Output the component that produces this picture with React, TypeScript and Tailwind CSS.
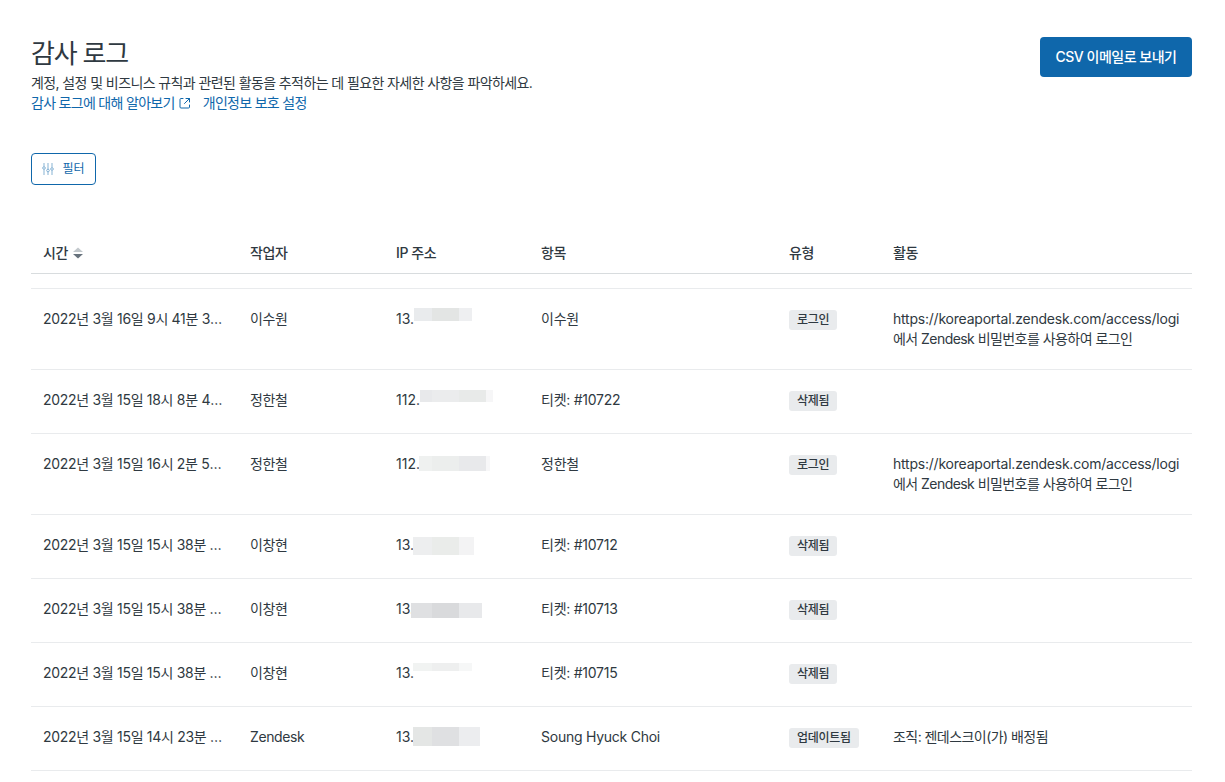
const rows = [
  {
    time: "2022년 3월 16일 9시 41분 33초",
    actor: "이수원",
    ip: "13.",
    blur: "left-[18px] top-[-1px] h-[13px]",
    segments: ["w-[18px] bg-[#e9ebed]", "w-[27px] bg-[#e3e5e4]", "w-[13px] bg-[#eeeff1]"],
    item: "이수원",
    type: "로그인",
    login: true,
  },
  {
    time: "2022년 3월 15일 18시 8분 47초",
    actor: "정한철",
    ip: "112.",
    blur: "left-[24px] top-0 h-[12px]",
    segments: ["w-[12px] bg-[#e8e9eb]", "w-[27px] bg-[#ebeced]", "w-[27px] bg-[#e8eae9]", "w-[7px] bg-[#f6f6f7]"],
    item: "티켓: #10722",
    type: "삭제됨",
  },
  {
    time: "2022년 3월 15일 16시 2분 52초",
    actor: "정한철",
    ip: "112.",
    blur: "left-[23px] top-[2px] h-[15px]",
    segments: ["w-[13px] bg-[#eff1f0]", "w-[27px] bg-[#eceeed]", "w-[27px] bg-[#e8e9eb]", "w-[4px] bg-[#f7f7f8]"],
    item: "정한철",
    type: "로그인",
    login: true,
  },
  {
    time: "2022년 3월 15일 15시 38분 21초",
    actor: "이창현",
    ip: "13.",
    blur: "left-[17px] top-[2px] h-[18px]",
    segments: ["w-[19px] bg-[#edeeef]", "w-[27px] bg-[#eaecea]", "w-[15px] bg-[#f3f3f4]"],
    item: "티켓: #10712",
    type: "삭제됨",
  },
  {
    time: "2022년 3월 15일 15시 38분 19초",
    actor: "이창현",
    ip: "13.",
    blur: "left-[15px] top-[4px] h-[15px]",
    segments: ["w-[21px] bg-[#dfe0e2]", "w-[27px] bg-[#d9dadc]", "w-[23px] bg-[#e8e9eb]"],
    item: "티켓: #10713",
    type: "삭제됨",
  },
  {
    time: "2022년 3월 15일 15시 38분 17초",
    actor: "이창현",
    ip: "13.",
    blur: "left-[17px] top-0 h-[8px]",
    segments: ["w-[19px] bg-[#f1f3f2]", "w-[27px] bg-[#eeefef]", "w-[13px] bg-[#f6f7f7]"],
    item: "티켓: #10715",
    type: "삭제됨",
  },
  {
    time: "2022년 3월 15일 14시 23분 10초",
    actor: "Zendesk",
    ip: "13.",
    blur: "left-[17px] top-0 h-[19px]",
    segments: ["w-[19px] bg-[#e4e6e5]", "w-[27px] bg-[#dfe0e2]", "w-[21px] bg-[#ecedef]"],
    item: "Soung Hyuck Choi",
    type: "업데이트됨",
    activity: "조직: 젠데스크이(가) 배정됨",
  },
];

const columns = "grid grid-cols-[207px_146px_145px_248px_104px_311px]";

function Row({ row }: { row: (typeof rows)[number] }) {
  return (
    <div className={`${columns} border-b border-[#e9ebed] pt-5 ${row.login ? "h-[81px]" : "h-[64px]"}`}>
      <div className="truncate px-3 tracking-[-0.3px]">{row.time}</div>
      <div className="pl-3 tracking-[-0.4px]">{row.actor}</div>
      <div className="relative ml-3 h-5">
        {row.ip}
        <div className={`absolute flex ${row.blur}`}>
          {row.segments.map((segment, i) => (
            <span key={i} className={segment} />
          ))}
        </div>
      </div>
      <div className="pl-3 tracking-[-0.25px]">{row.item}</div>
      <div className="pl-3">
        <span className="mt-px inline-flex h-5 items-center rounded-[3px] bg-[#e9ebed] px-2 text-xs font-medium tracking-[-0.3px]">
          {row.type}
        </span>
      </div>
      <div className="mr-[13px] overflow-hidden pl-3">
        {row.login ? (
          <>
            <div className="whitespace-nowrap tracking-[-0.22px]">https://koreaportal.zendesk.com/access/login</div>
            <div className="tracking-[-0.55px]">에서 Zendesk 비밀번호를 사용하여 로그인</div>
          </>
        ) : (
          <div className="tracking-[-0.55px]">{row.activity}</div>
        )}
      </div>
    </div>
  );
}

export default function App() {
  return (
    <div className="h-[782px] overflow-hidden bg-white pl-[31px] pr-[33px] pt-[37px] font-['Inter','Noto_Sans_CJK_KR',sans-serif] text-sm text-[#2f3941]">
      <div className="flex items-start justify-between">
        <div>
          <h1 className="pt-px text-[26px] leading-8 tracking-[-1.2px]">감사 로그</h1>
          <p className="mt-[3px] leading-5 tracking-[-0.6px]">계정, 설정 및 비즈니스 규칙과 관련된 활동을 추적하는 데 필요한 자세한 사항을 파악하세요.</p>
          <div className="flex items-center leading-5 tracking-[-0.7px] text-[#0f67ab]">
            <a className="flex items-center gap-1">
              감사 로그에 대해 알아보기
              <svg viewBox="0 0 12 12" className="h-3 w-3" fill="none" stroke="currentColor">
                <path strokeLinecap="round" d="M10.5 8V10a1 1 0 01-1 1H2a1 1 0 01-1-1V2.500a1 1 0 011-1h2M7 1.500h3.500V5M10.500 1.500L5.500 6.500" />
              </svg>
            </a>
            <a className="ml-3">개인정보 보호 설정</a>
          </div>
        </div>
        <button className="h-10 w-[152px] rounded bg-[#0f67ab] font-medium tracking-[-0.5px] text-white">CSV 이메일로 보내기</button>
      </div>

      <button className="mt-10 flex h-8 w-[65px] items-center justify-center gap-2 rounded border border-[#0f67ab] text-xs text-[#0f67ab]">
        <svg viewBox="0 0 12 14" className="h-[14px] w-3 opacity-70" fill="none" stroke="currentColor" strokeWidth="0.7">
          <path d="M2 1v3.500M2 7.500V13M6 1v6M6 10v3M10 1v4.500M10 8.500V13" />
          <circle cx="2" cy="6" r="1.300" />
          <circle cx="6" cy="8.500" r="1.300" />
          <circle cx="10" cy="7" r="1.300" />
        </svg>
        필터
      </button>

      <div className="mt-[48px]">
        <div className={`${columns} h-[41px] items-center border-b border-[#d8dcde] font-medium tracking-[-0.4px]`}>
          <div className="flex items-center gap-[5px] pl-3">
            시간
            <svg viewBox="0 0 10 12" className="h-3 w-[10px]">
              <path d="M5 .5L10 5H0z" fill="#c2c8cc" />
              <path d="M5 11.500L0 7h10z" fill="#68737d" />
            </svg>
          </div>
          <div className="pl-3">작업자</div>
          <div className="pl-3">IP 주소</div>
          <div className="pl-3">항목</div>
          <div className="pl-3">유형</div>
          <div className="pl-3">활동</div>
        </div>
        <div className="h-[15px] border-b border-[#e9ebed]" />
        {rows.map((row, i) => (
          <Row key={i} row={row} />
        ))}
      </div>
    </div>
  );
}
